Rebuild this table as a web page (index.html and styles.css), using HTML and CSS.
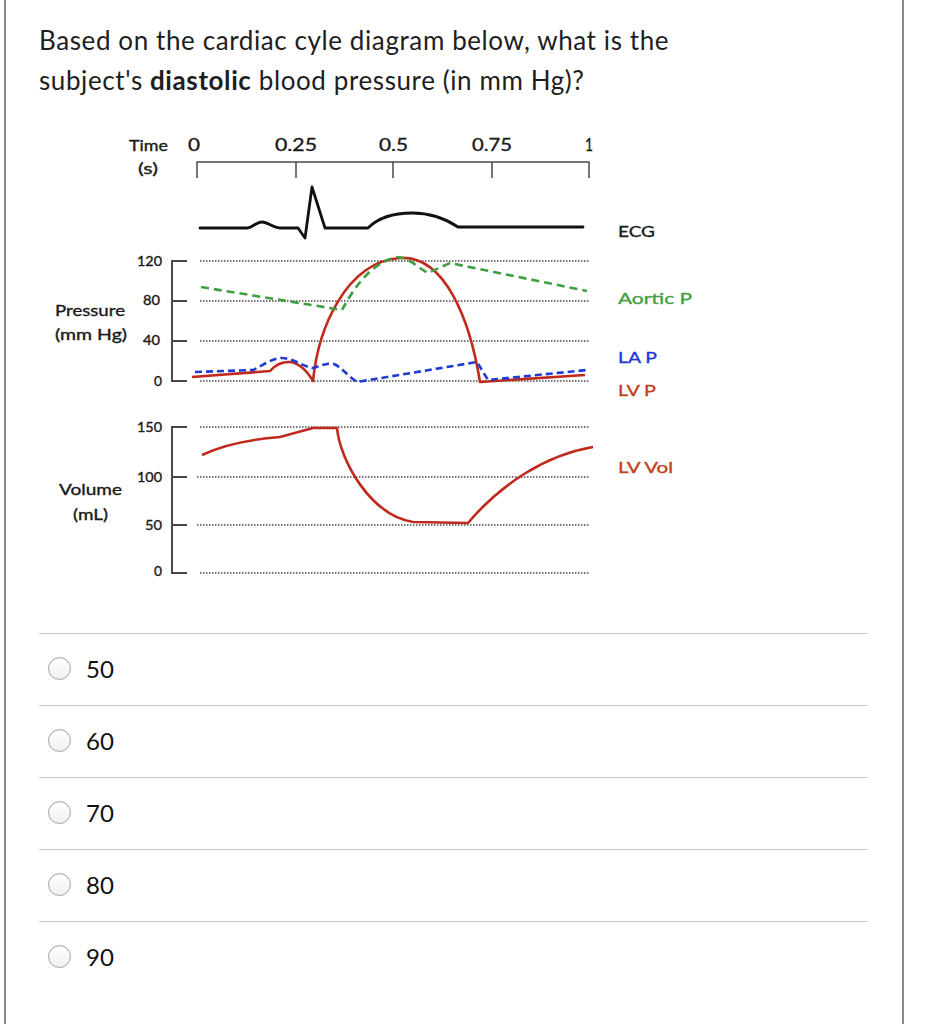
FILE: index.html
```html
<!DOCTYPE html>
<html lang="en">
<head>
<meta charset="utf-8">
<title>Cardiac cycle question</title>
<link rel="stylesheet" href="styles.css">
</head>
<body>
<div class="card">
  <div class="question">
    <p class="qtext">Based on the cardiac cyle diagram below, what is the<br>subject's <strong>diastolic</strong> blood pressure (in mm Hg)?</p>
  </div>
  <svg class="diagram" width="660" height="490" viewBox="40 120 660 490" xmlns="http://www.w3.org/2000/svg">
    <!-- time axis labels -->
    <g class="lbl">
      <text x="129" y="151" textLength="39" lengthAdjust="spacingAndGlyphs">Time</text>
      <text x="138" y="174" textLength="20" lengthAdjust="spacingAndGlyphs">(s)</text>
    </g>
    <g class="lbl md">
      <text x="188" y="151" textLength="12" lengthAdjust="spacingAndGlyphs">0</text>
      <text x="275" y="151" textLength="42" lengthAdjust="spacingAndGlyphs">0.25</text>
      <text x="379" y="151" textLength="29" lengthAdjust="spacingAndGlyphs">0.5</text>
      <text x="472" y="151" textLength="40" lengthAdjust="spacingAndGlyphs">0.75</text>
      <text x="585" y="151" textLength="8" lengthAdjust="spacingAndGlyphs">1</text>
    </g>
    <path class="axis" d="M197,178 V162 H589 V178 M296,162 V178 M393,162 V178 M492,162 V178"/>

    <!-- ECG -->
    <path class="ecg" d="M200,228 H247 C252,228 256,222 262,222 C268,222 273,228 280,228 H298 L305,238 L312,187 L325,228 H368 C378,218 393,213 412,213 C430,213 446,219 458,227 H583"/>

    <!-- pressure axis -->
    <g class="lbl sm">
      <text x="137" y="266" textLength="25" lengthAdjust="spacingAndGlyphs">120</text>
      <text x="143" y="305" textLength="17" lengthAdjust="spacingAndGlyphs">80</text>
      <text x="143" y="345" textLength="17" lengthAdjust="spacingAndGlyphs">40</text>
      <text x="154" y="386" textLength="8" lengthAdjust="spacingAndGlyphs">0</text>
    </g>
    <g class="lbl">
      <text x="55" y="316" textLength="70" lengthAdjust="spacingAndGlyphs">Pressure</text>
      <text x="55" y="340" textLength="72" lengthAdjust="spacingAndGlyphs">(mm Hg)</text>
    </g>
    <path class="axis thick" d="M187,261 H172 V381 H187 M172,301 H187 M172,341 H187"/>
    <path class="grid" d="M200,261 H589 M200,301 H589 M200,341 H589 M200,381 H589"/>

    <!-- pressure curves -->
    <path class="lvp" d="M192,377 L270,371 C276,364 282,362 289,362 C297,362 306,369 313,381 C318,330 345,262 400,258 C445,255 470,320 480,382 L585,375"/>
    <path class="aop" d="M201,287 L342,310 C352,292 368,264 397,257 C410,258 418,268 428,273 L450,263 L587,291"/>
    <path class="lap" d="M195,372 L253,370 C262,366 272,358 282,358 C292,358 302,366 313,368 C322,365 328,363 334,364 C341,367 348,376 357,382 L477,362 L488,380 L587,370"/>

    <!-- volume axis -->
    <g class="lbl sm">
      <text x="137" y="432" textLength="25" lengthAdjust="spacingAndGlyphs">150</text>
      <text x="137" y="482" textLength="25" lengthAdjust="spacingAndGlyphs">100</text>
      <text x="145" y="530" textLength="17" lengthAdjust="spacingAndGlyphs">50</text>
      <text x="154" y="576" textLength="8" lengthAdjust="spacingAndGlyphs">0</text>
    </g>
    <g class="lbl">
      <text x="59" y="495" textLength="63" lengthAdjust="spacingAndGlyphs">Volume</text>
      <text x="73" y="520" textLength="35" lengthAdjust="spacingAndGlyphs">(mL)</text>
    </g>
    <path class="axis thick" d="M187,427 H172 V573 H187 M172,477 H187 M172,525 H187"/>
    <path class="grid" d="M200,427 H589 M197,477 H589 M197,525 H589 M200,573 H589"/>
    <path class="lvp" d="M202,455 C225,444 255,439 280,437 L313,428 H337 C340,460 370,515 413,522 L468,523 C500,485 545,455 593,447"/>

    <!-- legend labels -->
    <g class="lbl">
      <text x="618" y="237" textLength="37" lengthAdjust="spacingAndGlyphs">ECG</text>
      <text class="c-ao" x="618" y="304" textLength="74" lengthAdjust="spacingAndGlyphs">Aortic P</text>
      <text class="c-la" x="618" y="363" textLength="39" lengthAdjust="spacingAndGlyphs">LA P</text>
      <text class="c-lv" x="618" y="396" textLength="38" lengthAdjust="spacingAndGlyphs">LV P</text>
      <text class="c-lv" x="618" y="473" textLength="55" lengthAdjust="spacingAndGlyphs">LV Vol</text>
    </g>
  </svg>

  <ul class="answers">
    <li class="answer"><span class="radio"></span><span class="atext">50</span></li>
    <li class="answer"><span class="radio"></span><span class="atext">60</span></li>
    <li class="answer"><span class="radio"></span><span class="atext">70</span></li>
    <li class="answer"><span class="radio"></span><span class="atext">80</span></li>
    <li class="answer"><span class="radio"></span><span class="atext">90</span></li>
  </ul>
</div>
</body>
</html>
```

FILE: styles.css
```css
html, body {
  margin: 0;
  padding: 0;
  background: #ffffff;
}

body {
  font-family: Lato, "Open Sans", "Liberation Sans", sans-serif;
  color: #1e1e1e;
}

.card {
  margin-left: 4px;
  width: 896px;
  min-height: 1024px;
  border-left: 2px solid #8c8c8c;
  border-right: 2px solid #8c8c8c;
  box-sizing: content-box;
}

.question {
  padding: 20px 0 0 33px;
  margin-bottom: 20px;
}

.qtext {
  margin: 0;
  font-size: 26px;
  letter-spacing: 0.6px;
  line-height: 40px;
  color: #1e1e1e;
}

.qtext strong {
  font-weight: 700;
}

.diagram {
  display: block;
  margin-left: 34px;
}

.lbl text {
  font-family: Lato, "Open Sans", sans-serif;
  font-size: 16px;
  fill: #1a1a1a;
  stroke: #1a1a1a;
  stroke-width: 0.35px;
}

.lbl.md text {
  font-size: 17px;
}

.lbl.sm text {
  font-size: 13.5px;
}

.lbl text.c-ao { fill: #43a047; stroke: #43a047; }
.lbl text.c-la { fill: #1f37d8; stroke: #1f37d8; }
.lbl text.c-lv { fill: #c2431c; stroke: #c2431c; }

.axis {
  fill: none;
  stroke: #4a4a4a;
  stroke-width: 1.5;
}

.axis.thick {
  stroke-width: 2;
}

.grid {
  fill: none;
  stroke: #4a4a4a;
  stroke-width: 1.5;
  stroke-dasharray: 1.5 1.5;
}

.ecg {
  fill: none;
  stroke: #111;
  stroke-width: 2.8;
  stroke-linejoin: round;
  stroke-linecap: round;
}

.lvp {
  fill: none;
  stroke: #c0291c;
  stroke-width: 2.6;
  stroke-linejoin: round;
}

.aop {
  fill: none;
  stroke: #3f9e3f;
  stroke-width: 2.6;
  stroke-dasharray: 8 5;
}

.lap {
  fill: none;
  stroke: #1f3bd6;
  stroke-width: 2.6;
  stroke-dasharray: 7 4;
}

.answers {
  list-style: none;
  margin: 23px 34px 0 33px;
  padding: 0;
}

.answer {
  display: flex;
  align-items: center;
  box-sizing: border-box;
  height: 72px;
  padding-bottom: 3px;
  border-top: 1px solid #c9c9c9;
}

.radio {
  display: block;
  box-sizing: border-box;
  width: 23px;
  height: 23px;
  margin-left: 9px;
  margin-right: 15px;
  border-radius: 50%;
  border: 1px solid #a3a3a3;
  background: linear-gradient(#ffffff, #f0f0f0);
  box-shadow: inset 0 1px 1px rgba(0, 0, 0, 0.06);
}

.atext {
  font-size: 24px;
  color: #111;
}
```
